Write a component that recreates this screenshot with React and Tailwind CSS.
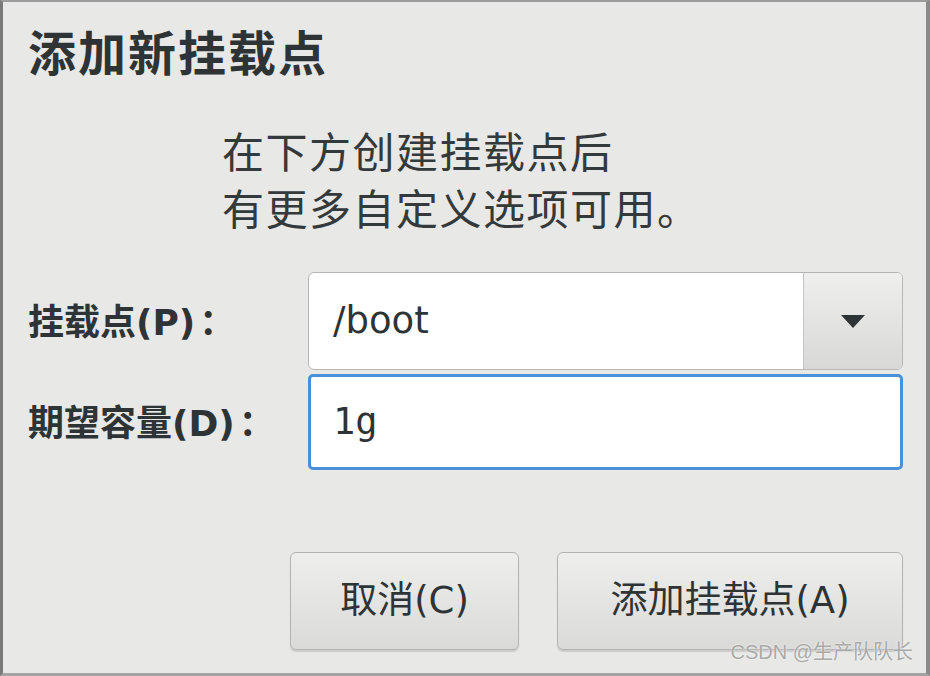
import React from 'react'

const cjk = '"DejaVu Sans", "Noto Sans CJK SC", sans-serif'

function Dropdown({ value }) {
  return (
    <div className="flex h-[98px] w-[595px] overflow-hidden rounded-[6px] border border-[#b6b6b3] bg-white">
      <div className="flex flex-1 items-center pl-[24px] text-[37px] text-[#2e3436]">{value}</div>
      <div className="flex w-[99px] items-center justify-center border-l border-[#c4c4c1] bg-gradient-to-b from-[#efefee] to-[#d8d8d6]">
        <svg width="24" height="13" viewBox="0 0 24 13">
          <path d="M0 0 L24 0 L12 13 Z" fill="#2e3436" />
        </svg>
      </div>
    </div>
  )
}

function Button({ label, width }) {
  return (
    <button
      className={`flex h-[98px] items-center justify-center rounded-[6px] border border-[#b3b3b0] bg-gradient-to-b from-[#eeeeec] to-[#dadad8] text-[37px] text-[#2e3436] shadow-[0_2px_1px_rgba(0,0,0,0.12)] ${width}`}
      style={{ fontFamily: cjk }}
    >
      {label}
    </button>
  )
}

function Label({ text }) {
  return (
    <span className="text-[36px] font-bold text-[#2e3436]">
      {text}
      <span className="ml-[4px]" style={{ fontFamily: '"Noto Sans CJK SC", sans-serif' }}>：</span>
    </span>
  )
}

export default function App() {
  return (
    <div
      className="relative box-border flex h-[676px] w-[930px] flex-col border-t-2 border-r-4 border-b-[3px] border-l-[3px] border-t-[#9c9c9c] border-r-[#8a8a8a] border-b-[#a3a3a3] border-l-[#7a7a7a] bg-[#e8e8e7] pr-[23px] pl-[25px]"
      style={{ fontFamily: cjk }}
    >
      {/* header */}
      <h1 className="mt-[24px] h-[56px] text-[48px] leading-[56px] font-bold tracking-[2px] text-[#2e3436]">
        添加新挂载点
      </h1>

      {/* hint */}
      <div className="mt-[43px] ml-[194px] text-[42px] leading-[57px] tracking-[1.5px] text-[#34393b]">
        <div>在下方创建挂载点后</div>
        <div>有更多自定义选项可用。</div>
      </div>

      {/* form */}
      <div className="mt-[33px] flex flex-col gap-[4px]">
        <div className="flex items-center justify-between">
          <Label text="挂载点(P)" />
          <Dropdown value="/boot" />
        </div>
        <div className="flex items-center justify-between">
          <Label text="期望容量(D)" />
          <div className="flex h-[96px] w-[595px] items-center rounded-[5px] border-[3px] border-[#4a90d9] bg-white pl-[22px]">
            <span className="text-[37px] text-[#2e3436]" style={{ fontFamily: '"DejaVu Sans Mono", monospace' }}>
              1g
            </span>
          </div>
        </div>
      </div>

      {/* actions */}
      <div className="mt-[82px] flex justify-end gap-[38px]">
        <Button label="取消(C)" width="w-[229px]" />
        <Button label="添加挂载点(A)" width="w-[346px]" />
      </div>

      <span
        className="absolute right-[13px] bottom-[6px] text-[20px] text-[#a9a9a7] [text-shadow:0_0_2px_#ffffff]"
        style={{ fontFamily: '"Liberation Sans", "Noto Sans CJK SC", sans-serif' }}
      >
        CSDN @生产队队长
      </span>
    </div>
  )
}
